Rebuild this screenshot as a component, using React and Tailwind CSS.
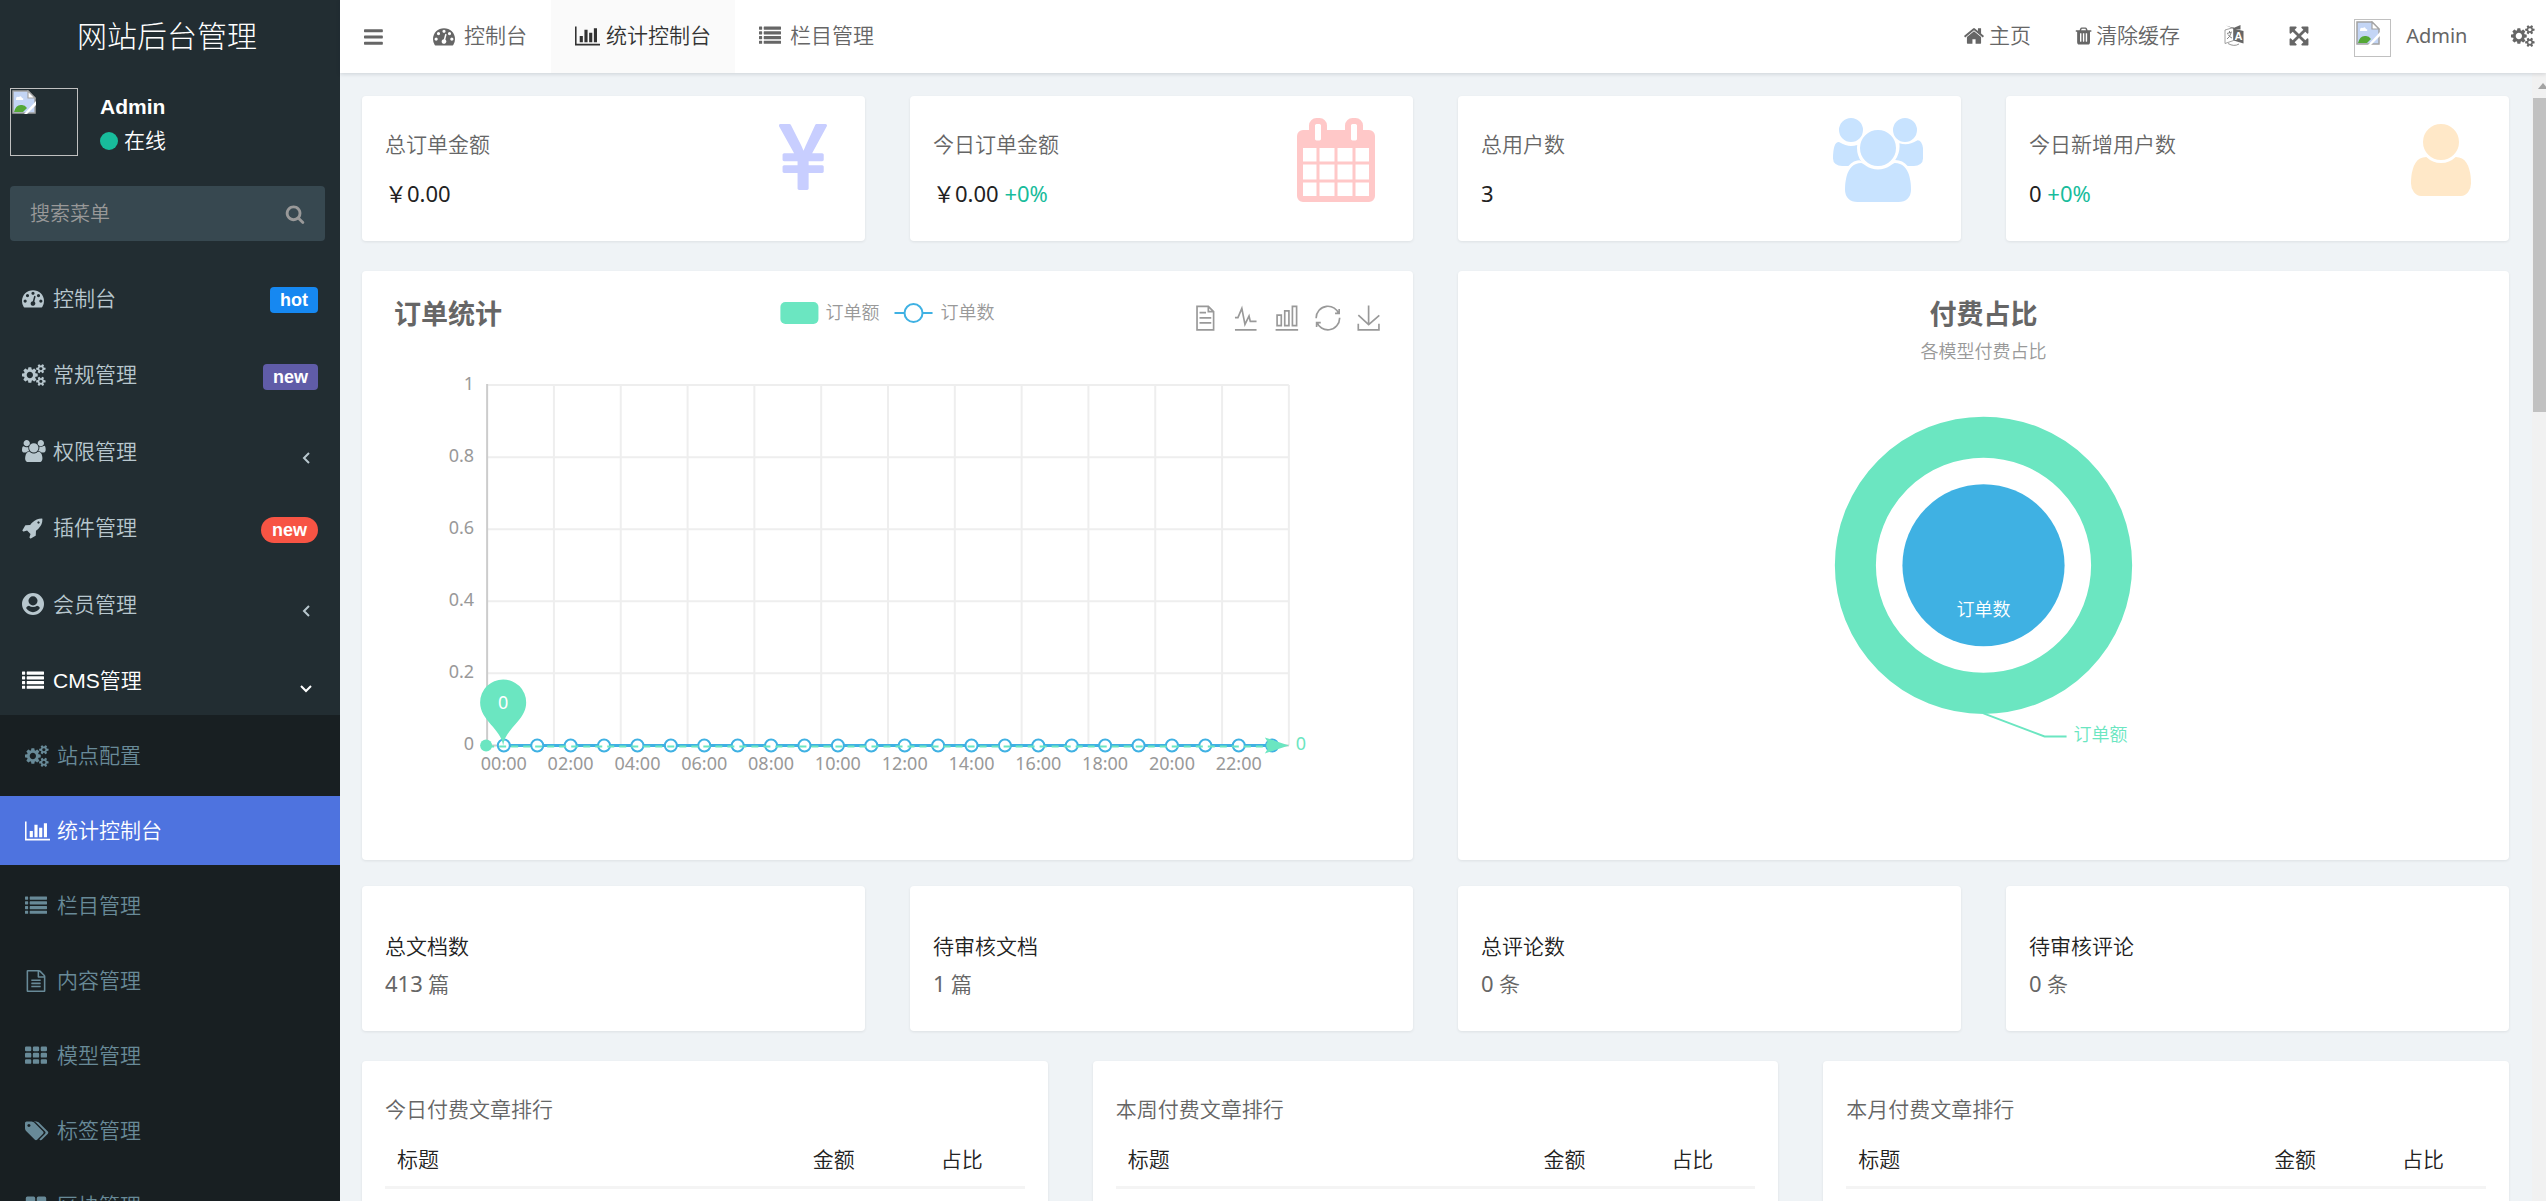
import React, { useState } from 'react';
import clsx from 'clsx';

// Font Awesome 4 glyphs: [width, path], all 1792 high
const GLYPHS = {
  bars: [1536, 'M1536 1344v128q0 26-19 45t-45 19h-1408q-26 0-45-19t-19-45v-128q0-26 19-45t45-19h1408q26 0 45 19t19 45zm0-512v128q0 26-19 45t-45 19h-1408q-26 0-45-19t-19-45v-128q0-26 19-45t45-19h1408q26 0 45 19t19 45zm0-512v128q0 26-19 45t-45 19h-1408q-26 0-45-19t-19-45v-128q0-26 19-45t45-19h1408q26 0 45 19t19 45z'],
  search: [1792, 'M1216 832q0-185-131.500-316.500t-316.500-131.500-316.500 131.500-131.500 316.500 131.500 316.500 316.500 131.500 316.500-131.500 131.500-316.500zm512 832q0 52-38 90t-90 38q-54 0-90-38l-343-342q-179 124-399 124-143 0-273.500-55.500t-225-150-150-225-55.500-273.500 55.500-273.500 150-225 225-150 273.500-55.500 273.500 55.500 225 150 150 225 55.500 273.500q0 220-124 399l343 343q37 37 37 90z'],
  dashboard: [1792, 'M384 1152q0-53-37.500-90.500t-90.500-37.500-90.500 37.500-37.500 90.500 37.500 90.500 90.500 37.500 90.500-37.500 37.500-90.500zm192-448q0-53-37.500-90.500t-90.500-37.500-90.500 37.500-37.500 90.500 37.500 90.500 90.500 37.500 90.500-37.500 37.500-90.500zm428 481l101-382q6-26-7.500-48.500t-38.500-29.500-48 6.500-30 39.500l-101 382q-60 5-107 43.500t-63 98.500q-20 77 20 146t117 89 146-20 89-117q16-60-6-117t-72-91zm660-33q0-53-37.500-90.500t-90.500-37.500-90.500 37.500-37.500 90.500 37.500 90.500 90.500 37.500 90.500-37.500 37.500-90.500zm-640-640q0-53-37.500-90.500t-90.500-37.500-90.500 37.500-37.500 90.500 37.500 90.500 90.500 37.500 90.500-37.500 37.500-90.500zm448 192q0-53-37.500-90.500t-90.500-37.500-90.500 37.500-37.500 90.500 37.500 90.500 90.500 37.500 90.500-37.500 37.500-90.500zm320 448q0 261-141 483-19 29-54 29h-1402q-35 0-54-29-141-221-141-483 0-182 71-348t191-286 286-191 348-71 348 71 286 191 191 286 71 348z'],
  cogs: [1920, 'M896 896q0-106-75-181t-181-75-181 75-75 181 75 181 181 75 181-75 75-181zm768 512q0-52-38-90t-90-38-90 38-38 90q0 53 37.500 90.500t90.500 37.500 90.500-37.500 37.500-90.500zm0-1024q0-52-38-90t-90-38-90 38-38 90q0 53 37.500 90.500t90.500 37.500 90.500-37.500 37.500-90.500zm-384 421v185q0 10-7 19.500t-16 10.500l-155 24q-11 35-32 76 34 48 90 115 7 11 7 20 0 12-7 19-23 30-82.500 89.500t-78.500 59.500q-11 0-21-7l-115-90q-37 19-77 31-11 108-23 155-7 24-30 24h-186q-11 0-20-7.500t-10-17.500l-23-153q-34-10-75-31l-118 89q-7 7-20 7-11 0-21-8-144-133-144-160 0-9 7-19 10-14 41-53t47-61q-23-44-35-82l-152-24q-10-1-17-9.500t-7-19.500v-185q0-10 7-19.500t16-10.500l155-24q11-35 32-76-34-48-90-115-7-11-7-20 0-12 7-20 22-30 82-89t79-59q11 0 21 7l115 90q34-18 77-32 11-108 23-154 7-24 30-24h186q11 0 20 7.500t10 17.500l23 153q34 10 75 31l118-89q8-7 20-7 11 0 21 8 144 133 144 160 0 9-7 19-12 16-42 54t-45 60q23 48 34 82l152 23q10 2 17 10.500t7 19.500zm640 533v140q0 16-149 31-12 27-30 52 51 113 51 138 0 4-4 7-122 71-124 71-8 0-46-47t-52-68q-20 2-30 2t-30-2q-14 21-52 68t-46 47q-2 0-124-71-4-3-4-7 0-25 51-138-18-25-30-52-149-15-149-31v-140q0-16 149-31 13-29 30-52-51-113-51-138 0-4 4-7 4-2 35-20t59-34 30-16q8 0 46 46.500t52 67.500q20-2 30-2t30 2q51-71 92-112l6-2q4 0 124 70 4 3 4 7 0 25-51 138 17 23 30 52 149 15 149 31zm0-1024v140q0 16-149 31-12 27-30 52 51 113 51 138 0 4-4 7-122 71-124 71-8 0-46-47t-52-68q-20 2-30 2t-30-2q-14 21-52 68t-46 47q-2 0-124-71-4-3-4-7 0-25 51-138-18-25-30-52-149-15-149-31v-140q0-16 149-31 13-29 30-52-51-113-51-138 0-4 4-7 4-2 35-20t59-34 30-16q8 0 46 46.500t52 67.500q20-2 30-2t30 2q51-71 92-112l6-2q4 0 124 70 4 3 4 7 0 25-51 138 17 23 30 52 149 15 149 31z'],
  users: [1920, 'M593 896q-162 5-265 128h-134q-82 0-138-40.500t-56-118.500q0-353 124-353 6 0 43.500 21t97.500 42.500 119 21.500q67 0 133-23-5 37-5 66 0 159 93 293zm1071 637q0 120-73 189.500t-194 69.500h-874q-121 0-194-69.500t-73-189.500q0-53 3.500-103.500t14-109 26.500-108.500 43-97.500 62-81 85.500-53.500 111.500-20q10 0 43 21.500t73 48 107 48 135 21.500 135-21.500 107-48 73-48 43-21.500q61 0 111.500 20t85.500 53.500 62 81 43 97.500 26.500 108.500 14 109 3.500 103.500zm-1024-1277q0 106-75 181t-181 75-181-75-75-181 75-181 181-75 181 75 75 181zm704 384q0 159-112.500 271.500t-271.500 112.500-271.500-112.500-112.500-271.500 112.500-271.500 271.500-112.500 271.500 112.500 112.500 271.500zm576 225q0 78-56 118.500t-138 40.500h-134q-103-123-265-128 93-134 93-293 0-29-5-66 66 23 133 23 59 0 119-21.500t97.500-42.500 43.500-21q124 0 124 353zm-128-609q0 106-75 181t-181 75-181-75-75-181 75-181 181-75 181 75 75 181z'],
  user: [1280, 'M1280 1399q0 109-62.500 187t-150.500 78h-854q-88 0-150.500-78t-62.500-187q0-85 8.500-160.500t31.500-152 58.500-131 94-89 134.500-34.500q131 128 313 128t313-128q76 0 134.500 34.500t94 89 58.500 131 31.500 152 8.500 160.500zm-256-887q0 159-112.500 271.500t-271.500 112.500-271.500-112.500-112.500-271.500 112.500-271.500 271.500-112.500 271.500 112.500 112.500 271.500z'],
  calendar: [1664, 'M128 1664h288v-288h-288v288zm352 0h320v-288h-320v288zm-352-352h288v-320h-288v320zm352 0h320v-320h-320v320zm-352-384h288v-288h-288v288zm736 736h320v-288h-320v288zm-384-736h320v-288h-320v288zm768 736h288v-288h-288v288zm-384-352h320v-320h-320v320zm-352-864v-288q0-13-9.500-22.500t-22.500-9.500h-64q-13 0-22.500 9.500t-9.500 22.500v288q0 13 9.500 22.500t22.500 9.500h64q13 0 22.500-9.500t9.500-22.500zm736 864h288v-320h-288v320zm-384-384h320v-288h-320v288zm384 0h288v-288h-288v288zm32-480v-288q0-13-9.500-22.500t-22.500-9.500h-64q-13 0-22.500 9.500t-9.500 22.500v288q0 13 9.500 22.500t22.500 9.500h64q13 0 22.500-9.500t9.500-22.500zm384-64v1280q0 52-38 90t-90 38h-1408q-52 0-90-38t-38-90v-1280q0-52 38-90t90-38h128v-96q0-66 47-113t113-47h64q66 0 113 47t47 113v96h384v-96q0-66 47-113t113-47h64q66 0 113 47t47 113v96h128q52 0 90 38t38 90z'],
  yen: [1027, 'M600 1536h-172q-13 0-22.500-9t-9.500-23v-330h-288q-13 0-22.500-9t-9.500-23v-103q0-13 9.500-22.500t22.500-9.500h288v-85h-288q-13 0-22.500-9t-9.500-23v-104q0-13 9.500-22.500t22.500-9.500h214l-321-578q-8-16 0-32 10-16 28-16h194q19 0 29 18l215 425q19 38 56 125 10-24 30.500-68t27.500-61l191-420q8-19 29-19h191q17 0 27 16 9 14 1 31l-313 579h215q13 0 22.500 9.500t9.500 22.500v104q0 14-9.500 23t-22.500 9h-290v85h290q13 0 22.500 9.500t9.500 22.500v103q0 14-9.500 23t-22.500 9h-290v330q0 13-9.500 22.500t-22.500 9.500z'],
  rocket: [1792, 'M1440 448q0-40-28-68t-68-28-68 28-28 68 28 68 68 28 68-28 28-68zm224-288q0 249-75.500 430.500t-253.500 360.500q-81 80-195 176l-20 379q-2 16-16 26l-384 224q-7 4-16 4-12 0-23-9l-64-64q-13-14-8-32l85-276-281-281-276 85q-3 1-9 1-14 0-23-9l-64-64q-17-19-5-39l224-384q10-14 26-16l379-20q96-114 176-195 188-187 358-258t431-71q14 0 24 9.500t10 22.500z'],
  userCircle: [1792, 'M896 0A896 896 0 0 1 896 1792A896 896 0 0 1 896 0zM896 270A370 370 0 0 0 896 1010A370 370 0 0 0 896 270zM330 1230Q550 1560 896 1560T1462 1230Q1402 1040 1232 1030Q896 1270 560 1030Q390 1040 330 1230z'],
  list: [1792, 'M32 1280h192q32 0 32 32v192q0 32-32 32h-192q-32 0-32-32v-192q0-32 32-32zm0-384h192q32 0 32 32v192q0 32-32 32h-192q-32 0-32-32v-192q0-32 32-32zm0-384h192q32 0 32 32v192q0 32-32 32h-192q-32 0-32-32v-192q0-32 32-32zm0-384h192q32 0 32 32v192q0 32-32 32h-192q-32 0-32-32v-192q0-32 32-32zm384 1152h1344q32 0 32 32v192q0 32-32 32h-1344q-32 0-32-32v-192q0-32 32-32zm0-384h1344q32 0 32 32v192q0 32-32 32h-1344q-32 0-32-32v-192q0-32 32-32zm0-384h1344q32 0 32 32v192q0 32-32 32h-1344q-32 0-32-32v-192q0-32 32-32zm0-384h1344q32 0 32 32v192q0 32-32 32h-1344q-32 0-32-32v-192q0-32 32-32z'],
  chart: [2048, 'M640 896v512h-256v-512h256zm384-512v1024h-256v-1024h256zm1024 1152v128h-2048v-1536h128v1408h1920zm-640-896v768h-256v-768h256zm384-384v1152h-256v-1152h256z'],
  th: [1792, 'M96 128h320q96 0 96 96v192q0 96-96 96h-320q-96 0-96-96v-192q0-96 96-96zm640 0h320q96 0 96 96v192q0 96-96 96h-320q-96 0-96-96v-192q0-96 96-96zm640 0h320q96 0 96 96v192q0 96-96 96h-320q-96 0-96-96v-192q0-96 96-96zm-1280 512h320q96 0 96 96v192q0 96-96 96h-320q-96 0-96-96v-192q0-96 96-96zm640 0h320q96 0 96 96v192q0 96-96 96h-320q-96 0-96-96v-192q0-96 96-96zm640 0h320q96 0 96 96v192q0 96-96 96h-320q-96 0-96-96v-192q0-96 96-96zm-1280 512h320q96 0 96 96v192q0 96-96 96h-320q-96 0-96-96v-192q0-96 96-96zm640 0h320q96 0 96 96v192q0 96-96 96h-320q-96 0-96-96v-192q0-96 96-96zm640 0h320q96 0 96 96v192q0 96-96 96h-320q-96 0-96-96v-192q0-96 96-96z'],
  thLarge: [1792, 'M192 128h512q128 0 128 128v384q0 128-128 128h-512q-128 0-128-128v-384q0-128 128-128zm896 0h512q128 0 128 128v384q0 128-128 128h-512q-128 0-128-128v-384q0-128 128-128zm-896 768h512q128 0 128 128v384q0 128-128 128h-512q-128 0-128-128v-384q0-128 128-128zm896 0h512q128 0 128 128v384q0 128-128 128h-512q-128 0-128-128v-384q0-128 128-128z'],
  tags: [1920, 'M448 448q0-53-37.500-90.500t-90.500-37.500-90.500 37.500-37.500 90.500 37.500 90.500 90.500 37.500 90.500-37.500 37.500-90.500zm1067 576q0 53-37 90l-491 492q-39 37-91 37-53 0-90-37l-715-716q-38-37-64.500-101t-26.500-117v-416q0-52 38-90t90-38h416q53 0 117 26.500t102 64.500l715 714q37 39 37 91zm384 0q0 53-37 90l-491 492q-39 37-91 37-36 0-59-14t-53-45l470-470q37-37 37-90 0-52-37-91l-715-714q-38-38-102-64.500t-117-26.500h224q53 0 117 26.500t102 64.500l715 714q37 39 37 91z'],
  file: [1792, 'M1596 380q28 28 48 76t20 88v1152q0 40-28 68t-68 28h-1344q-40 0-68-28t-28-68v-1600q0-40 28-68t68-28h896q40 0 88 20t76 48zm-444-244v376h376q-10-29-22-41l-313-313q-12-12-41-22zm384 1528v-1024h-416q-40 0-68-28t-28-68v-416h-768v1536h1280zm-1024-864q0-14 9-23t23-9h704q14 0 23 9t9 23v64q0 14-9 23t-23 9h-704q-14 0-23-9t-9-23v-64zm736 224q14 0 23 9t9 23v64q0 14-9 23t-23 9h-704q-14 0-23-9t-9-23v-64q0-14 9-23t23-9h704zm0 256q14 0 23 9t9 23v64q0 14-9 23t-23 9h-704q-14 0-23-9t-9-23v-64q0-14 9-23t23-9h704z'],
  home: [1792, 'M1472 992v480q0 26-19 45t-45 19h-384v-384h-256v384h-384q-26 0-45-19t-19-45v-480q0-1 .5-3t.5-3l575-474 575 474q1 2 1 6zm223-69l-62 74q-8 9-21 11h-3q-13 0-21-7l-692-577-692 577q-12 8-24 7-13-2-21-11l-62-74q-8-10-7-23.500t11-21.500l719-599q32-26 76-26t76 26l244 204v-195q0-14 9-23t23-9h192q14 0 23 9t9 23v408l219 182q10 8 11 21.500t-7 23.500z'],
  trash: [1536, 'M576 1376v-704q0-14-9-23t-23-9h-64q-14 0-23 9t-9 23v704q0 14 9 23t23 9h64q14 0 23-9t9-23zm256 0v-704q0-14-9-23t-23-9h-64q-14 0-23 9t-9 23v704q0 14 9 23t23 9h64q14 0 23-9t9-23zm256 0v-704q0-14-9-23t-23-9h-64q-14 0-23 9t-9 23v704q0 14 9 23t23 9h64q14 0 23-9t9-23zm-544-992h448l-48-117q-7-9-17-11h-317q-10 2-17 11zm928 32v64q0 14-9 23t-23 9h-96v948q0 83-47 143.500t-113 60.500h-832q-66 0-113-58.500t-47-141.500v-952h-96q-14 0-23-9t-9-23v-64q0-14 9-23t23-9h309l70-167q15-37 54-63t79-26h320q40 0 79 26t54 63l70 167h309q14 0 23 9t9 23z'],
  arrows: [1792, 'M1411 541l-355 355 355 355 144-144q29-31 70-14 39 17 39 59v448q0 26-19 45t-45 19h-448q-42 0-59-40-17-39 14-69l144-144-355-355-355 355 144 144q31 30 14 69-17 40-59 40h-448q-26 0-45-19t-19-45v-448q0-42 40-59 39-17 69 14l144 144 355-355-355-355-144 144q-19 19-45 19-12 0-24-5-40-17-40-59v-448q0-26 19-45t45-19h448q42 0 59 40 17 39-14 69l-144 144 355 355 355-355-144-144q-31-30-14-69 17-40 59-40h448q26 0 45 19t19 45v448q0 42-39 59-13 5-25 5-26 0-45-19z'],
};

const Icon = ({ name, className = 'h-[22px]' }) => {
  const [width, d] = GLYPHS[name];
  return (
    <svg viewBox={`0 0 ${width} 1792`} className={clsx('shrink-0 w-auto', className)} fill="currentColor" aria-hidden="true">
      <path d={d} />
    </svg>
  );
};

const LanguageIcon = () => (
  <svg viewBox="0 0 20 21" className="h-[21px] w-5" aria-hidden="true">
    <path d="M1 5 9.500 2.500v13L1 18.500z" fill="#fff" stroke="#888" strokeWidth="0.800" />
    <path d="M2 .5 9.500 3 16.500 0v4.500L10 4z" fill="#666" />
    <path d="M9.500 3.500l10 2.500V18.500l-10-3z" fill="#666" />
    <path d="M3 8.500l5-1.500M5.500 6v2M7 8q-1 4-4 6M4 9.500q2 3 4 3.500" fill="none" stroke="#777" strokeWidth="0.900" />
    <path d="M4 18.500q6 3.500 11 .5" fill="none" stroke="#888" strokeWidth="0.900" />
    <text x="14.500" y="15" textAnchor="middle" fontSize="11" fontWeight="700" fill="#fff" fontFamily="Liberation Sans">A</text>
  </svg>
);

// Avatar that has no picture behind it
const Avatar = ({ className }) => (
  <div className={clsx('shrink-0 border border-[#c0c0c0] p-px', className)}>
    <svg viewBox="0 0 24 24" className="h-6 w-6" aria-hidden="true">
      <path d="M1 1h15l7 7v15H1z" fill="#c3d5f5" stroke="#a3a3a3" strokeWidth="1.500" />
      <path d="M16 1v7h7z" fill="#fff" stroke="#a3a3a3" strokeWidth="1.200" />
      <path d="M4 9q0-3 3-2 2-2 3 1 2 0 1 2H4z" fill="#fff" />
      <path d="M2 22q2-8 8-7 3 0 5 3l-4 4z" fill="#54a836" />
      <path d="M12 24 24 11v4l-9 9z" fill="#fff" />
    </svg>
  </div>
);

const menuItems = [
  { icon: 'dashboard', label: '控制台', badge: 'hot', badgeClass: 'rounded bg-[#1688f1] px-2.5' },
  { icon: 'cogs', label: '常规管理', badge: 'new', badgeClass: 'rounded bg-[#605ca8] px-2.5' },
  { icon: 'users', label: '权限管理', arrow: 'M7 1 2 6l5 5' },
  { icon: 'rocket', label: '插件管理', badge: 'new', badgeClass: 'rounded-full bg-[#f75444] px-[11px]' },
  { icon: 'userCircle', label: '会员管理', arrow: 'M7 1 2 6l5 5' },
  { icon: 'list', label: 'CMS管理', arrow: 'M-1 4l5 5 5-5', open: true },
];

const subItems = [
  { icon: 'cogs', label: '站点配置' },
  { icon: 'chart', label: '统计控制台' },
  { icon: 'list', label: '栏目管理' },
  { icon: 'file', label: '内容管理' },
  { icon: 'th', label: '模型管理' },
  { icon: 'tags', label: '标签管理' },
  { icon: 'thLarge', label: '区块管理' },
];

const Sidebar = ({ active, onSelect }) => (
  <aside className="w-[340px] shrink-0 overflow-hidden bg-[#222d32] font-['Liberation_Sans','Noto_Sans_CJK_SC',sans-serif] text-[#b8c7ce]">
    <a href="#home" className="flex h-[73px] items-center justify-center pr-1.5 text-[30px] font-light text-white">网站后台管理</a>
    <div className="flex h-[113px] gap-[22px] px-2.5 pt-[15px] text-white">
      <Avatar className="h-[68px] w-[68px]" />
      <div className="pt-0.5 leading-[34px]">
        <p className="font-bold">Admin</p>
        <p className="flex items-center gap-1.5"><span className="h-[18px] w-[18px] rounded-full bg-[#18bc9c]" />在线</p>
      </div>
    </div>
    <form className="mr-[15px] ml-2.5 flex h-[55px] items-center rounded bg-[#374850] pr-5 pl-5" onSubmit={(e) => e.preventDefault()}>
      <input type="text" aria-label="搜索菜单" placeholder="搜索菜单" className="min-w-0 flex-1 bg-transparent text-xl outline-none placeholder:text-[#999]" />
      <button type="submit" aria-label="搜索" className="text-[#999]"><Icon name="search" className="h-5" /></button>
    </form>
    <nav className="pt-[15px]">
      <ul className="grid h-[459px] grid-rows-6">
        {menuItems.map((item) => (
          <li key={item.label}>
            <a href="#menu" className={clsx('flex h-full items-center px-[22px] pt-2', item.open && 'text-white')}>
              <span className="flex w-[31px]"><Icon name={item.icon} /></span>
              <span className="flex-1">{item.label}</span>
              {item.badge && <span className={clsx('mt-1 text-lg leading-[26px] font-bold text-white', item.badgeClass)}>{item.badge}</span>}
              {item.arrow && (
                <svg viewBox="-2 0 12 12" className="mt-3.5 mr-1.5 h-3 w-3" fill="none" stroke="currentColor" strokeWidth="2" aria-hidden="true">
                  <path d={item.arrow} />
                </svg>
              )}
            </a>
          </li>
        ))}
      </ul>
      <ul className="flex flex-col gap-1.5 bg-[#181f22] pt-1.5 text-[#688a98]">
        {subItems.map((item) => (
          <li key={item.label}>
            <a
              href="#sub"
              onClick={() => onSelect(item.label)}
              className={clsx('flex h-[69px] items-center pl-[25px]', active === item.label && 'bg-[#4e73df] text-white')}
            >
              <span className="flex w-8"><Icon name={item.icon} /></span>
              {item.label}
            </a>
          </li>
        ))}
      </ul>
    </nav>
  </aside>
);

const tabs = [
  { icon: 'dashboard', label: '控制台' },
  { icon: 'chart', label: '统计控制台' },
  { icon: 'list', label: '栏目管理' },
];

const Header = ({ active, onSelect }) => (
  <header className="z-10 flex h-[73px] shrink-0 items-center justify-between bg-white text-[#666] shadow-[0_1px_4px_rgba(0,21,41,0.15)]">
    <div className="flex h-full items-center">
      <button type="button" aria-label="菜单" className="flex h-full w-[69px] items-center pl-6"><Icon name="bars" /></button>
      {tabs.map((tab) => (
        <a
          key={tab.label}
          href="#tab"
          onClick={() => onSelect(tab.label)}
          className={clsx('flex h-full items-center px-6 pb-0.5', active === tab.label && 'bg-[#fafafa] text-[#333]')}
        >
          <span className="flex w-[31px]"><Icon name={tab.icon} /></span>
          {tab.label}
        </a>
      ))}
    </div>
    <div className="flex items-center gap-11 pr-[11px] pb-0.5">
      <a href="#index" className="flex items-center gap-1"><Icon name="home" />主页</a>
      <a href="#cache" className="flex items-center gap-1"><Icon name="trash" className="h-5" />清除缓存</a>
      <button type="button" aria-label="语言"><LanguageIcon /></button>
      <button type="button" aria-label="全屏"><Icon name="arrows" /></button>
      <a href="#profile" className="flex items-center gap-[15px] text-xl font-normal"><Avatar className="mt-1 h-[38px] w-[37px]" />Admin</a>
      <button type="button" aria-label="设置"><Icon name="cogs" /></button>
    </div>
  </header>
);

const Card = ({ className, children }) => (
  <section className={clsx('rounded bg-white shadow-[0_1px_3px_rgba(0,0,0,0.08)]', className)}>{children}</section>
);

const stats = [
  { label: '总订单金额', value: '￥0.00', icon: 'yen', color: 'text-[#c8ceff]' },
  { label: '今日订单金额', value: '￥0.00', rate: '+0%', icon: 'calendar', color: 'text-[#ffc8c8]' },
  { label: '总用户数', value: '3', icon: 'users', color: 'text-[#c8e3ff]' },
  { label: '今日新增用户数', value: '0', rate: '+0%', icon: 'user', color: 'text-[#ffe8c8]' },
];

const docs = [
  { label: '总文档数', count: 413, unit: '篇' },
  { label: '待审核文档', count: 1, unit: '篇' },
  { label: '总评论数', count: 0, unit: '条' },
  { label: '待审核评论', count: 0, unit: '条' },
];

const rankings = ['今日付费文章排行', '本周付费文章排行', '本月付费文章排行'];

// Toolbox of the order chart: data view, line, bar, restore, save
const tools = [
  'M17.5,17.3H33M45.4,29.5h-28M11.5,2v56H51V14.8L38.4,2H11.5zM38.4,2.2v12.7H51M45.4,41.7h-28',
  'M4.1,28.9h7.1l9.3-22l7.4,38l9.7-19.7l3,12.8h14.9M4.1,58h51.4',
  'M6.7,22.9h10V48h-10V22.9zM24.9,13h10v35h-10V13zM43.2,2h10v46h-10V2zM3.1,58h53.7',
  'M47,18.9h9.8V8.7M56.3,20.1C52.1,9,40.5,0.6,26.8,2.1C12.6,3.7,1.6,16.2,2.1,30.6M13,41.1H3.1v10.2M3.7,39.900c4.2,11.1,15.8,19.5,29.5,18c14.2-1.6,25.2-14.1,24.7-28.5',
  'M4.7,22.9L29.3,45.5L54.7,23.4M4.6,43.6L4.6,58L53.8,58L53.8,43.6M29.2,45.1L29.2,0',
];

const LEFT = 125;
const RIGHT = 926;
const TOP = 114;
const BASE = 474;
const CELL = (RIGHT - LEFT) / 24;

const OrderChart = () => {
  const points = Array.from({ length: 24 }, (_, i) => LEFT + CELL * (i + 0.5));
  return (
    <svg viewBox="0 0 1050 588" className="block w-full" role="img" aria-label="订单统计">
      <text x="32" y="53" fontSize="27" fontWeight="700" fill="#666">订单统计</text>
      <rect x="418" y="31" width="38" height="22" rx="5" fill="#6be6c1" />
      <g fontSize="18" fill="#999">
        <text x="463" y="48">订单额</text>
        <text x="578" y="48">订单数</text>
      </g>
      <g stroke="#3fb1e3" strokeWidth="2" fill="#fff">
        <path d="M532 42h38" />
        <circle cx="551" cy="42" r="9" />
      </g>
      <g fill="none" stroke="#999" strokeWidth="4">
        {tools.map((d, i) => (
          <svg key={d} x={829 + i * 41} y="34" width="26" height="26" viewBox="-1 -1 62 62"><path d={d} /></svg>
        ))}
      </g>

      <g stroke="#eee" strokeWidth="2">
        {[0, 1, 2, 3, 4].map((i) => <path key={i} d={`M${LEFT} ${TOP + i * 72}H${RIGHT}`} />)}
        {Array.from({ length: 12 }, (_, i) => <path key={i} d={`M${LEFT + CELL * 2 * (i + 1)} ${TOP}V${BASE}`} />)}
      </g>
      <path d={`M${LEFT} ${TOP - 1}V${BASE}H${RIGHT}`} fill="none" stroke="#ccc" strokeWidth="2" />
      <g fontSize="18" fontWeight="400" fill="#999" textAnchor="end">
        {['1', '0.8', '0.6', '0.4', '0.2', '0'].map((t, i) => <text key={t} x="112" y={TOP + 5 + i * 72}>{t}</text>)}
      </g>
      <g fontSize="18" fontWeight="400" fill="#999" textAnchor="middle">
        {points.filter((_, i) => i % 2 === 0).map((x, i) => (
          <text key={x} x={x} y="499">{`${String(i * 2).padStart(2, '0')}:00`}</text>
        ))}
      </g>

      <path d={`M${points[0]} ${BASE}H${points[23]}`} stroke="#3fb1e3" strokeWidth="3" />
      <g fill="#fff" stroke="#3fb1e3" strokeWidth="2">
        {points.map((x) => <circle key={x} cx={x} cy={BASE} r="6" />)}
      </g>
      <path d={`M${LEFT} ${BASE + 1}H${RIGHT - 20}`} stroke="#6be6c1" strokeWidth="2" strokeDasharray="7 5" />
      <circle cx={LEFT - 1} cy={BASE} r="6" fill="#6be6c1" />
      <path d={`M${RIGHT} ${BASE}l-24-8 5 8-5 8z`} fill="#6be6c1" />
      <circle cx={points[23] - 1} cy={BASE} r="5" fill="#6be6c1" />
      <path d="M141 474C139 457 118 449 118 431a23 23 0 0 1 46 0C164 449 143 457 141 474z" fill="#6be6c1" />
      <g fontSize="18" fontWeight="400">
        <text x="141" y="438" fill="#fff" textAnchor="middle">0</text>
        <text x="933" y="479" fill="#6be6c1">0</text>
      </g>
    </svg>
  );
};

const PayChart = () => (
  <svg viewBox="0 0 1050 588" className="block w-full" role="img" aria-label="付费占比">
    <text x="525" y="53" fontSize="27" fontWeight="700" fill="#666" textAnchor="middle">付费占比</text>
    <text x="525" y="87" fontSize="18" fill="#999" textAnchor="middle">各模型付费占比</text>
    <circle cx="525" cy="294" r="128" fill="none" stroke="#6be6c1" strokeWidth="41" />
    <circle cx="525" cy="294" r="81" fill="#3fb1e3" />
    <text x="525" y="345" fontSize="18" fill="#fff" textAnchor="middle">订单数</text>
    <path d="M525 442l61 23h22" fill="none" stroke="#6be6c1" strokeWidth="2" />
    <text x="615" y="470" fontSize="18" fill="#6be6c1">订单额</text>
  </svg>
);

const Dashboard = () => (
  <main className="min-w-0 flex-1 overflow-hidden pt-[23px] pr-[23px] pl-[22px]">
    <div className="mb-[30px] grid grid-cols-4 gap-[45px]">
      {stats.map((s) => (
        <Card key={s.label} className="flex h-[145px] justify-between pr-[38px] pl-[23px]">
          <div className="pt-6 leading-[49px]">
            <h3>{s.label}</h3>
            <p className="text-[22px] font-normal text-[#222]">{s.value} {s.rate && <span className="text-[#18bc9c]">{s.rate}</span>}</p>
          </div>
          <Icon name={s.icon} className={clsx('mt-[22px] h-[84px]', s.color)} />
        </Card>
      ))}
    </div>
    <div className="mb-[26px] grid grid-cols-2 gap-[45px]">
      <Card><OrderChart /></Card>
      <Card><PayChart /></Card>
    </div>
    <div className="mb-[30px] grid grid-cols-4 gap-[45px]">
      {docs.map((d) => (
        <Card key={d.label} className="h-[145px] px-[23px] pt-[42px] leading-[37px]">
          <h3 className="text-[#222]">{d.label}</h3>
          <p><span className="text-[22px] font-normal">{d.count}</span> {d.unit}</p>
        </Card>
      ))}
    </div>
    <div className="grid grid-cols-3 gap-[45px]">
      {rankings.map((title) => (
        <Card key={title} className="h-[400px] px-[23px] pt-6">
          <h3 className="leading-[49px]">{title}</h3>
          <table className="w-full table-fixed text-left text-[#222]">
            <thead>
              <tr className="h-[54px] border-b-3 border-[#f4f4f4]">
                <th className="w-[65%] pl-3 font-[350]">标题</th>
                <th className="w-[20%] pl-3 font-[350]">金额</th>
                <th className="w-[15%] pl-3 font-[350]">占比</th>
              </tr>
            </thead>
          </table>
        </Card>
      ))}
    </div>
  </main>
);

const Scrollbar = () => (
  <div className="flex w-3.5 shrink-0 flex-col items-center bg-[#f1f1f1]" aria-hidden="true">
    <svg viewBox="0 0 14 25" className="h-[25px] w-3.5"><path d="M6 16l5-6 5 6z" fill="#a3a3a3" /></svg>
    <div className="h-[314px] w-[13px] self-end bg-[#c1c1c1]" />
  </div>
);

const App = () => {
  const [active, setActive] = useState('统计控制台');

  return (
    <div className="flex h-screen overflow-hidden bg-[#eff3f6] font-['Noto_Sans','Noto_Sans_CJK_SC',sans-serif] text-[21px] font-[350] text-[#666]">
      <Sidebar active={active} onSelect={setActive} />
      <div className="flex min-w-0 flex-1 flex-col">
        <Header active={active} onSelect={setActive} />
        <div className="flex min-h-0 flex-1">
          <Dashboard />
          <Scrollbar />
        </div>
      </div>
    </div>
  );
};

export default App;
